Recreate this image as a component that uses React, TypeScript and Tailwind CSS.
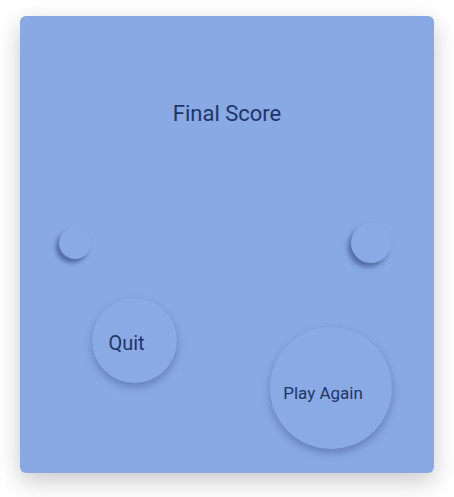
import React from "react"

export default function App() {
  return (
    <div className="min-h-[497px] w-full bg-white pt-4 font-['Roboto',sans-serif]">
      <div className="relative mx-auto h-[457px] w-[414px] rounded-md bg-[#89a9e5] shadow-[0_8px_24px_rgba(0,0,0,0.22)]">
        {/* Title */}
        <div className="flex justify-center pt-[84px]">
          <h1 className="text-[22px] leading-7 text-[#1f3567]">Final Score</h1>
        </div>

        {/* Bubbles */}
        <div className="absolute left-[39px] top-[211px] h-8 w-8 rounded-full bg-[#8aaae6] shadow-[-3px_4px_4px_rgba(35,55,110,0.55)]" />
        <div className="absolute left-[331px] top-[207px] h-10 w-10 rounded-full bg-[#8aaae6] shadow-[-3px_4px_5px_rgba(35,55,110,0.55)]" />

        {/* Buttons */}
        <button className="absolute left-[72px] top-[282px] flex h-[85px] w-[85px] items-center justify-center rounded-full bg-[#8aaae6] pr-4 pt-1 text-[20px] text-[#1f3567] shadow-[0_4px_8px_rgba(30,50,110,0.35)]">
          Quit
        </button>
        <button className="absolute left-[250px] top-[311px] flex h-[122px] w-[122px] items-center justify-center rounded-full bg-[#8aaae6] pr-4 pt-3 text-[17px] text-[#1f3567] shadow-[0_4px_9px_rgba(30,50,110,0.35)]">
          Play Again
        </button>
      </div>
    </div>
  )
}
